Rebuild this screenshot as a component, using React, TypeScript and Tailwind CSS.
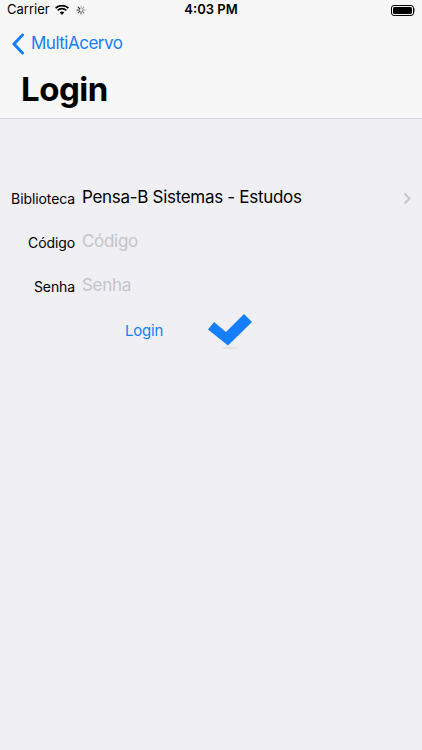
import React from 'react'

const Row = ({ label, children }: { label: string; children: React.ReactNode }) => (
  <div className="flex h-[44px] items-center">
    <span className="w-[75px] shrink-0 text-right text-[14px] tracking-[-0.1px] text-black">{label}</span>
    <div className="ml-[7px] flex flex-1 items-center">{children}</div>
  </div>
)

export default function App() {
  return (
    <div className="flex h-[750px] w-[422px] flex-col bg-[#efeff4] font-['Inter',sans-serif]">
      <div className="bg-[#f7f7f7]">
        <div className="flex h-5 items-center justify-between px-[7px] text-[13px] text-black">
          <div className="flex w-[120px] items-center gap-[5px]">
            <span>Carrier</span>
            <svg width="14" height="10" viewBox="0 0 14 10">
              <path d="M7 10 L4.8 7.6 A3.2 3.2 0 0 1 9.2 7.6 Z" fill="#000" />
              <path d="M2.6 5.4 A6.2 6.2 0 0 1 11.4 5.4" stroke="#000" strokeWidth="1.7" fill="none" />
              <path d="M0.6 3.2 A9.2 9.2 0 0 1 13.4 3.2" stroke="#000" strokeWidth="1.7" fill="none" />
            </svg>
            <svg width="10" height="10" viewBox="0 0 10 10" className="ml-[2px]">
              {[0, 45, 90, 135, 180, 225, 270, 315].map((a, i) => (
                <line
                  key={a}
                  x1="5"
                  y1="1"
                  x2="5"
                  y2="3.3"
                  stroke="#000"
                  strokeOpacity={0.25 + i * 0.09}
                  strokeWidth="1.1"
                  strokeLinecap="round"
                  transform={`rotate(${a} 5 5)`}
                />
              ))}
            </svg>
          </div>
          <span className="font-semibold">4:03 PM</span>
          <div className="flex w-[120px] justify-end">
            <div className="flex items-center">
              <div className="h-[11px] w-[23px] rounded-[3px] border border-black p-[1px]">
                <div className="h-full w-full rounded-[1.5px] bg-black" />
              </div>
              <div className="h-[4px] w-[1.5px] rounded-r-sm bg-black/50" />
            </div>
          </div>
        </div>
        <div className="flex h-[44px] items-center pl-[12px] pt-[3px]">
          <svg width="13" height="22" viewBox="0 0 13 22" className="mr-[6px]">
            <path d="M10.5 2 L2 11 L10.5 20" stroke="#147efb" strokeWidth="3" fill="none" strokeLinecap="round" strokeLinejoin="round" />
          </svg>
          <span className="text-[17px] tracking-[-0.5px] text-[#147efb]">MultiAcervo</span>
        </div>
        <div className="flex h-[54px] items-start pl-[21px] pt-[5px]">
          <h1 className="text-[33px] font-bold leading-[40px] tracking-[-0.5px] text-black">Login</h1>
        </div>
        <div className="h-px bg-[#d6d6da]" />
      </div>

      <div className="pt-[57px]">
        <Row label="Biblioteca">
          <span className="text-[17px] tracking-[-0.3px] text-black">Pensa-B Sistemas - Estudos</span>
          <svg width="8" height="13" viewBox="0 0 8 13" className="ml-auto mr-[11px]">
            <path d="M1.5 1.5 L6.5 6.5 L1.5 11.5" stroke="#c4c4c9" strokeWidth="1.8" fill="none" />
          </svg>
        </Row>
        <Row label="Código">
          <span className="text-[17px] tracking-[-0.3px] text-[#c4c4c9]">Código</span>
        </Row>
        <Row label="Senha">
          <span className="text-[17px] tracking-[-0.3px] text-[#c4c4c9]">Senha</span>
        </Row>
        <div className="flex h-[44px] items-center pt-[2px]">
          <span className="ml-[125px] text-[15px] tracking-[-0.2px] text-[#147efb]">Login</span>
          <svg width="50" height="40" viewBox="0 0 50 40" className="ml-[43px] mt-[2px]">
            <ellipse cx="24" cy="36" rx="8" ry="1.5" fill="#000" opacity="0.05" />
            <path d="M8 10 L20 20 L38 2 L46 10 L22 33.5 L2 17.5 Z" fill="#147efb" />
          </svg>
        </div>
      </div>
    </div>
  )
}
